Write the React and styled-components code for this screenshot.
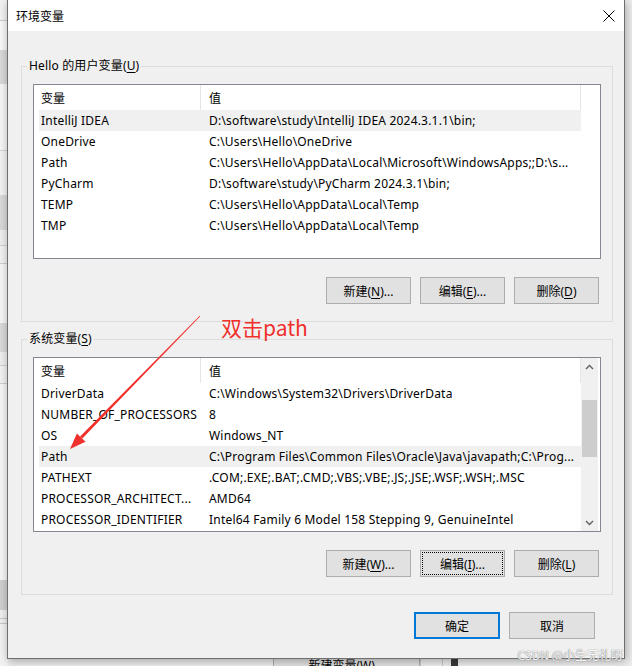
import React from 'react';
import styled, { createGlobalStyle } from 'styled-components';

const FONT = `"Noto Sans", "Noto Sans CJK SC", sans-serif`;

const GlobalStyle = createGlobalStyle`
  html, body { margin: 0; padding: 0; }
  body {
    width: 632px;
    height: 666px;
    overflow: hidden;
    background: #f0f0f0;
    font-family: ${FONT};
    font-size: 12px;
    color: #000;
  }
`;

const Desktop = styled.div`
  position: relative;
  width: 632px;
  height: 666px;
  overflow: hidden;
  background: #ededed;
`;

/* ---------- window behind the dialog (left strip) ---------- */
const BackStrip = styled.div`
  position: absolute;
  left: 0;
  top: 0;
  width: 8px;
  height: 666px;
  display: flex;
  flex-direction: column;
  background: #f4f4f4;
`;

const StripPiece = styled.div`
  flex: none;
  height: ${(p) => p.$h}px;
  background: ${(p) => p.$c};
`;

const BackButton = styled.div`
  position: absolute;
  left: 273px;
  top: 652px;
  width: 147px;
  height: 28px;
  box-sizing: border-box;
  border: 1px solid #adadad;
  background: #e1e1e1;
  display: flex;
  align-items: center;
  justify-content: center;
  font-size: 12px;
  line-height: 14px;
`;

const BackBar = styled.div`
  position: absolute;
  left: ${(p) => p.$x}px;
  top: 659px;
  width: ${(p) => p.$w}px;
  height: 7px;
  background: ${(p) => p.$c};
`;

/* ---------- dialog ---------- */
const Dialog = styled.div`
  position: absolute;
  left: 7px;
  top: 0;
  width: 618px;
  height: 659px;
  box-sizing: border-box;
  border: 1px solid #6f6f6f;
  border-top: none;
  background: #f0f0f0;
  display: flex;
  flex-direction: column;
  box-shadow: 1px 2px 9px rgba(0, 0, 0, 0.32);
`;

const TitleBar = styled.div`
  flex: none;
  height: 31px;
  background: #fff;
  display: flex;
  align-items: center;
  justify-content: space-between;
  padding: 0 8px 0 8px;
  font-size: 12px;
`;

const TitleText = styled.span`
  padding-top: 1px;
`;

const CloseBox = styled.div`
  width: 14px;
  height: 14px;
  display: flex;
  align-items: center;
  justify-content: center;
`;

const Body = styled.div`
  flex: 1;
  display: flex;
  flex-direction: column;
  padding: 27px 11px 0 13px;
`;

const Group = styled.fieldset`
  margin: ${(p) => (p.$first ? '0' : '9px')} 0 0 0;
  padding: 10px 11px 17px 11px;
  border: 1px solid #dcdcdc;
  min-width: 0;
  display: flex;
  flex-direction: column;
`;

const Legend = styled.legend`
  margin-left: -6px;
  padding: 0 2px;
  font-size: 12px;
  line-height: 16px;
  letter-spacing: 0.15px;
`;

const Mn = styled.span`
  text-decoration: underline;
  text-underline-offset: 2px;
`;

const ListBox = styled.div`
  height: 175px;
  box-sizing: border-box;
  border: 1px solid #828790;
  background: #fff;
  display: flex;
  overflow: hidden;
`;

const ListContent = styled.div`
  flex: none;
  width: 542px;
  padding-left: 5px;
  display: flex;
  flex-direction: column;
`;

const Grid = styled.div`
  display: grid;
  grid-template-columns: 162px 380px;
  height: ${(p) => p.$h}px;
  align-items: center;
  background: ${(p) => (p.$sel ? '#f0f0f0' : 'transparent')};
  white-space: nowrap;
`;

const HeadCell = styled.div`
  height: 100%;
  display: flex;
  align-items: center;
  box-sizing: border-box;
  padding-left: ${(p) => (p.$val ? 8 : 2)}px;
  border-right: 1px solid #e5e5e5;
`;

const Cell = styled.div`
  padding-left: ${(p) => (p.$val ? 8 : 2)}px;
  overflow: hidden;
  box-sizing: border-box;
  letter-spacing: 0.2px;
`;

const ScrollBar = styled.div`
  flex: none;
  width: 17px;
  background: #f0f0f0;
  display: flex;
  flex-direction: column;
`;

const ScrollArrow = styled.div`
  flex: none;
  height: 17px;
  display: flex;
  align-items: center;
  justify-content: center;
`;

const ScrollTrack = styled.div`
  flex: 1;
  display: flex;
  flex-direction: column;
  align-items: center;
`;

const Thumb = styled.div`
  width: 15px;
  background: #cdcdcd;
`;

const ButtonRow = styled.div`
  display: flex;
  justify-content: flex-end;
  gap: ${(p) => p.$gap || 9}px;
  margin-top: ${(p) => p.$top || 18}px;
  padding-right: ${(p) => p.$right || 2}px;
`;

const Button = styled.button`
  width: ${(p) => p.$w || 85}px;
  height: 27px;
  box-sizing: border-box;
  margin: 0;
  padding: 0;
  background: #e1e1e1;
  border: ${(p) => (p.$default ? '2px solid #0078d7' : '1px solid #adadad')};
  font-family: ${FONT};
  font-size: 12px;
  color: #000;
  outline: ${(p) => (p.$focus ? '1px dotted #000' : 'none')};
  outline-offset: -3px;
`;

/* ---------- annotations over the picture ---------- */
const Note = styled.div`
  position: absolute;
  left: 221px;
  top: 313px;
  color: #f0302c;
  font-family: "Noto Sans CJK SC", sans-serif;
  font-size: 21px;
  line-height: 28px;
`;

const Overlay = styled.svg`
  position: absolute;
  left: 0;
  top: 0;
  pointer-events: none;
`;

const Watermark = styled.div`
  position: absolute;
  right: 9px;
  top: 647px;
  font-family: "Noto Sans CJK SC", sans-serif;
  font-size: 12px;
  line-height: 16px;
  color: #f4f4f4;
  text-shadow: 0 0 1px #7a7a7a, 0 0 1px #9a9a9a;
`;

const userVars = [
  ['IntelliJ IDEA', String.raw`D:\software\study\IntelliJ IDEA 2024.3.1.1\bin;`, true],
  ['OneDrive', String.raw`C:\Users\Hello\OneDrive`],
  ['Path', String.raw`C:\Users\Hello\AppData\Local\Microsoft\WindowsApps;;D:\s...`],
  ['PyCharm', String.raw`D:\software\study\PyCharm 2024.3.1\bin;`],
  ['TEMP', String.raw`C:\Users\Hello\AppData\Local\Temp`],
  ['TMP', String.raw`C:\Users\Hello\AppData\Local\Temp`],
];

const sysVars = [
  ['DriverData', String.raw`C:\Windows\System32\Drivers\DriverData`],
  ['NUMBER_OF_PROCESSORS', '8'],
  ['OS', 'Windows_NT'],
  ['Path', String.raw`C:\Program Files\Common Files\Oracle\Java\javapath;C:\Prog...`, true],
  ['PATHEXT', '.COM;.EXE;.BAT;.CMD;.VBS;.VBE;.JS;.JSE;.WSF;.WSH;.MSC'],
  ['PROCESSOR_ARCHITECT...', 'AMD64'],
  ['PROCESSOR_IDENTIFIER', 'Intel64 Family 6 Model 158 Stepping 9, GenuineIntel'],
];

const strip = [
  [20, '#f2f2f2'], [1, '#cdcdcd'], [29, '#f8f8f8'], [34, '#d9d9d9'], [66, '#f6f6f6'],
  [1, '#d4d4d4'], [44, '#f3f3f3'], [35, '#d9d9d9'], [15, '#efefef'], [1, '#d0d0d0'],
  [17, '#f2f2f2'], [1, '#d0d0d0'], [59, '#f6f6f6'], [29, '#d9d9d9'], [13, '#efefef'],
  [1, '#d0d0d0'], [17, '#f2f2f2'], [1, '#d0d0d0'], [196, '#f6f6f6'], [30, '#cfcfcf'],
  [8, '#efefef'], [1, '#c8c8c8'], [4, '#f0f0f0'], [1, '#c8c8c8'], [50, '#f3f3f3'],
];

function Chevron({ down }) {
  return (
    <svg width="9" height="6" viewBox="0 0 9 6">
      <path
        d={down ? 'M1 1 L4.5 4.5 L8 1' : 'M1 5 L4.5 1.5 L8 5'}
        fill="none"
        stroke="#606060"
        strokeWidth="1.4"
      />
    </svg>
  );
}

function VarList({ rows, scroll }) {
  return (
    <ListBox>
      <ListContent>
        <Grid $h={25}>
          <HeadCell>变量</HeadCell>
          <HeadCell $val>值</HeadCell>
        </Grid>
        {rows.map(([name, value, sel]) => (
          <Grid key={name + value} $h={21} $sel={sel}>
            <Cell>{name}</Cell>
            <Cell $val>{value}</Cell>
          </Grid>
        ))}
      </ListContent>
      {scroll ? (
        <ScrollBar>
          <ScrollArrow>
            <Chevron />
          </ScrollArrow>
          <ScrollTrack>
            <Thumb style={{ marginTop: scroll.top, height: scroll.height }} />
          </ScrollTrack>
          <ScrollArrow>
            <Chevron down />
          </ScrollArrow>
        </ScrollBar>
      ) : null}
    </ListBox>
  );
}

export default function App() {
  return (
    <>
      <GlobalStyle />
      <Desktop>
        <BackStrip>
          {strip.map(([h, c], i) => (
            <StripPiece key={i} $h={h} $c={c} />
          ))}
        </BackStrip>
        <BackButton>新建变量(<Mn>W</Mn>)...</BackButton>
        <BackBar $x={420} $w={1} $c="#c8c8c8" />
        <BackBar $x={442} $w={1} $c="#c8c8c8" />
        <BackBar $x={451} $w={7} $c="#3a3a3a" />

        <Dialog>
          <TitleBar>
            <TitleText>环境变量</TitleText>
            <CloseBox>
              <svg width="12" height="12" viewBox="0 0 12 12">
                <path d="M0.5 0.5 L11.5 11.5 M11.5 0.5 L0.5 11.5" stroke="#000" strokeWidth="1" />
              </svg>
            </CloseBox>
          </TitleBar>
          <Body>
            <Group $first>
              <Legend>
                Hello 的用户变量(<Mn>U</Mn>)
              </Legend>
              <VarList rows={userVars} />
              <ButtonRow>
                <Button>
                  新建(<Mn>N</Mn>)...
                </Button>
                <Button>
                  编辑(<Mn>E</Mn>)...
                </Button>
                <Button>
                  删除(<Mn>D</Mn>)
                </Button>
              </ButtonRow>
            </Group>

            <Group>
              <Legend>
                系统变量(<Mn>S</Mn>)
              </Legend>
              <VarList rows={sysVars} scroll={{ top: 25, height: 57 }} />
              <ButtonRow>
                <Button>
                  新建(<Mn>W</Mn>)...
                </Button>
                <Button $focus>
                  编辑(<Mn>I</Mn>)...
                </Button>
                <Button>
                  删除(<Mn>L</Mn>)
                </Button>
              </ButtonRow>
            </Group>

            <ButtonRow $top={17} $right={18} $gap={9}>
              <Button $w={86} $default>
                确定
              </Button>
              <Button $w={86}>取消</Button>
            </ButtonRow>
          </Body>
        </Dialog>

        <Note>双击path</Note>
        <Overlay width="632" height="666" viewBox="0 0 632 666">
          <polygon points="200.3,316.3 199.7,315.7 80.1,436.6 82.3,438.6" fill="#f0302c" />
          <polygon points="70,449 85.5,441.8 76.9,433.4" fill="#f0302c" />
        </Overlay>
        <Watermark>CSDN @小生无礼呀</Watermark>
      </Desktop>
    </>
  );
}
